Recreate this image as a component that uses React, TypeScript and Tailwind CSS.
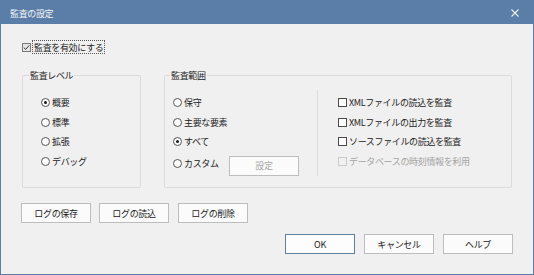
import React from 'react';

const font = { fontFamily: '"Noto Sans CJK JP", "Noto Sans", sans-serif' };

function Box({ checked = false, disabled = false }: { checked?: boolean; disabled?: boolean }) {
    return (
        <span
            className={`w-[9px] h-[9px] border flex items-center justify-center shrink-0 ${disabled ? 'border-[#cacaca] bg-[#f0f0f0]' : checked ? 'border-[#7a7a7a] bg-[#e6e6e6]' : 'border-[#4a4a4a] bg-white'}`}
        >
            {checked && (
                <svg width="7" height="7" viewBox="0 0 7 7">
                    <path d="M0.8 3.6 L2.7 5.4 L6.2 1.4" fill="none" stroke="#3a3a3a" strokeWidth="1" />
                </svg>
            )}
        </span>
    );
}

function Radio({ label, checked = false }: { label: string; checked?: boolean }) {
    return (
        <div className="flex items-center h-[19.5px]">
            <span className="w-[9px] h-[9px] rounded-full border border-[#555] bg-white flex items-center justify-center shrink-0">
                {checked && <span className="w-[3px] h-[3px] rounded-full bg-[#1a1a1a]" />}
            </span>
            <span className="ml-[2px] text-[#222]">{label}</span>
        </div>
    );
}

function Check({ label, disabled = false }: { label: string; disabled?: boolean }) {
    return (
        <div className="flex items-center h-[19.5px]">
            <Box disabled={disabled} />
            <span className={`ml-[2px] ${disabled ? 'text-[#a3a3a3]' : 'text-[#222]'}`}>{label}</span>
        </div>
    );
}

function Btn({ children, primary = false, disabled = false, className = '' }: { children: React.ReactNode; primary?: boolean; disabled?: boolean; className?: string }) {
    return (
        <button
            type="button"
            className={`w-[70px] h-[20px] border flex items-center justify-center ${primary ? 'border-[#5d7fa6] bg-[#fdfdfd]' : 'border-[#bdbdbd] bg-[#fbfbfb]'} ${disabled ? 'text-[#a8a8a8]' : 'text-[#222]'} ${className}`}
        >
            {children}
        </button>
    );
}

export default function App() {
    return (
        <div className="w-[534px] h-[275px] border border-[#5a7ea7] bg-[#f0f0f0] flex flex-col text-[9px] leading-none tracking-[-0.35px]" style={font}>
            {/* Title bar */}
            <div className="h-[23px] bg-[#5a7ea7] flex items-center justify-between pl-[9px] pr-[14px] shrink-0">
                <span className="text-[#f4f6f9] mt-[2px]">監査の設定</span>
                <svg width="8" height="8" viewBox="0 0 8 8">
                    <path d="M0.5 0.5 L7.5 7.5 M7.5 0.5 L0.5 7.5" stroke="#eef2f7" strokeWidth="1.1" />
                </svg>
            </div>

            {/* Body */}
            <div className="flex flex-col">
                <div className="flex items-center mt-[16px] ml-[21px] h-[14px]">
                    <Box checked />
                    <span className="ml-[1px] h-[14px] px-[1px] border border-dotted border-[#555] flex items-center text-[#222]">監査を有効にする</span>
                </div>

                <div className="flex mt-[21px] ml-[21px] gap-[23px]">
                    {/* Level */}
                    <div className="relative w-[119px] h-[113px] border border-[#dcdcdc] rounded-[2px] pt-[17px] pl-[18px]">
                        <span className="absolute -top-[5px] left-[6px] px-[1px] bg-[#f0f0f0] text-[#222]">監査レベル</span>
                        <Radio label="概要" checked />
                        <Radio label="標準" />
                        <Radio label="拡張" />
                        <Radio label="デバッグ" />
                    </div>

                    {/* Scope */}
                    <div className="relative w-[348px] h-[113px] border border-[#dcdcdc] rounded-[2px] flex">
                        <span className="absolute -top-[5px] left-[5px] px-[1px] bg-[#f0f0f0] text-[#222]">監査範囲</span>
                        <div className="w-[152px] pl-[8px] pr-[18px] pt-[17px]">
                            <Radio label="保守" />
                            <Radio label="主要な要素" />
                            <Radio label="すべて" checked />
                            <div className="flex items-center">
                                <Radio label="カスタム" />
                                <Btn disabled className="ml-auto mt-[4px]">設定</Btn>
                            </div>
                        </div>
                        <div className="w-px bg-[#dcdcdc] mt-[14px] mb-[11px]" />
                        <div className="pl-[20px] pt-[17px]">
                            <Check label="XMLファイルの読込を監査" />
                            <Check label="XMLファイルの出力を監査" />
                            <Check label="ソースファイルの読込を監査" />
                            <Check label="データベースの時刻情報を利用" disabled />
                        </div>
                    </div>
                </div>

                <div className="flex mt-[15px] ml-[20px] gap-[8px]">
                    <Btn>ログの保存</Btn>
                    <Btn>ログの読込</Btn>
                    <Btn className="ml-[1px]">ログの削除</Btn>
                </div>

                <div className="flex justify-end mt-[11px] mr-[20px] gap-[9px]">
                    <Btn primary>OK</Btn>
                    <Btn>キャンセル</Btn>
                    <Btn>ヘルプ</Btn>
                </div>
            </div>
        </div>
    );
}
